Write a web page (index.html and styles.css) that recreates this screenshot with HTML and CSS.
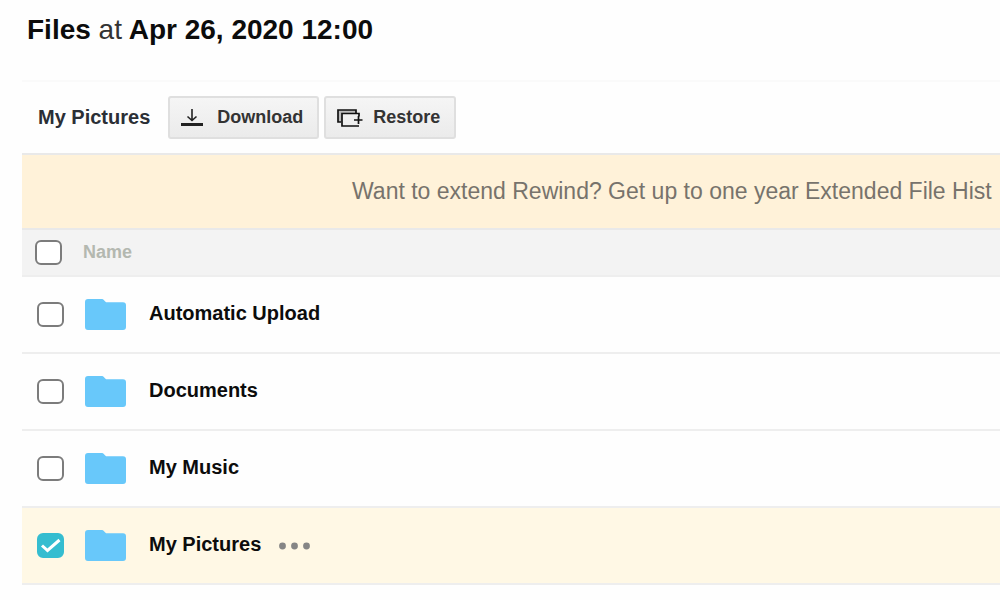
FILE: index.html
```
<!DOCTYPE html>
<html lang="en">
<head>
    <meta charset="UTF-8">
    <meta name="viewport" content="width=device-width, initial-scale=1.0">
    <title>Rewind</title>
    <link rel="stylesheet" href="styles.css">
</head>
<body>
    <svg class="sprite" aria-hidden="true">
        <symbol id="folder" viewBox="0 0 41 31">
            <path d="M3 0H17Q18 0 19 1.200L21 3.300H38Q41 3.300 41 6.300V28Q41 31 38 31H3Q0 31 0 28V3Q0 0 3 0Z" fill="#68c8fa"/>
        </symbol>
    </svg>

    <main class="page">
        <h1 class="title">Files <span>at</span> Apr 26, 2020 12:00</h1>

        <div class="toolbar">
            <h2 class="folder-name">My Pictures</h2>
            <button type="button" class="btn">
                <svg width="24" height="18" viewBox="0 0 24 18" fill="none" stroke="#222">
                    <path d="M11 0V11M6.500 7.500L11 11.500L15.500 7.500" stroke-width="1.600"/>
                    <path d="M0 15.500H22" stroke-width="3"/>
                </svg>
                <span>Download</span>
            </button>
            <button type="button" class="btn">
                <svg width="24" height="18" viewBox="0 0 24 18" fill="none" stroke="#111" stroke-width="1.700">
                    <path d="M1 1H19V4.500H5V13H1Z" fill="#bbb" stroke="none"/>
                    <path d="M4 13H1V1H19V4M22 17H5V4.500H22V7.500M17 11H25.500M21.500 7V15"/>
                </svg>
                <span>Restore</span>
            </button>
        </div>

        <div class="banner">
            <p>Want to extend Rewind? Get up to one year Extended File Hist</p>
        </div>

        <table class="files">
            <thead>
                <tr>
                    <th class="check"><input type="checkbox" aria-label="Select all"></th>
                    <th scope="col">Name</th>
                </tr>
            </thead>
            <tbody>
                <tr>
                    <td class="check"><input type="checkbox" id="upload"></td>
                    <td>
                        <div class="item">
                            <svg class="folder"><use href="#folder"/></svg>
                            <label for="upload">Automatic Upload</label>
                        </div>
                    </td>
                </tr>
                <tr>
                    <td class="check"><input type="checkbox" id="documents"></td>
                    <td>
                        <div class="item">
                            <svg class="folder"><use href="#folder"/></svg>
                            <label for="documents">Documents</label>
                        </div>
                    </td>
                </tr>
                <tr>
                    <td class="check"><input type="checkbox" id="music"></td>
                    <td>
                        <div class="item">
                            <svg class="folder"><use href="#folder"/></svg>
                            <label for="music">My Music</label>
                        </div>
                    </td>
                </tr>
                <tr class="selected">
                    <td class="check"><input type="checkbox" id="pictures" checked></td>
                    <td>
                        <div class="item">
                            <svg class="folder"><use href="#folder"/></svg>
                            <label for="pictures">My Pictures</label>
                            <button type="button" class="more" aria-label="More">
                                <svg width="31" height="8" viewBox="0 0 31 8" fill="#858585">
                                    <circle cx="3.500" cy="4" r="3.400"/>
                                    <circle cx="15.500" cy="4" r="3.400"/>
                                    <circle cx="27.500" cy="4" r="3.400"/>
                                </svg>
                            </button>
                        </div>
                    </td>
                </tr>
            </tbody>
        </table>
    </main>
</body>
</html>
```
FILE: styles.css
```
* {
    box-sizing: border-box;
}

body {
    margin: 0;
    background: #fefefe;
    color: #0c0c0c;
    font-family: "Liberation Sans", Arial, sans-serif;
}

.sprite {
    display: none;
}

.page {
    padding: 14px 0 0 22px;
    overflow: hidden;
}

.title {
    margin: 0;
    padding: 0 5px 34px;
    border-bottom: 2px solid #fafafa;
    font-size: 28px;
    line-height: 32px;
}

.title span {
    color: #333;
    font-weight: normal;
}

.toolbar {
    display: flex;
    align-items: center;
    gap: 5px;
    padding: 14px 16px;
}

.folder-name {
    margin: 0 13px 0 0;
    padding-bottom: 2px;
    color: #2b2f36;
    font-size: 20px;
    line-height: 24px;
}

.btn {
    display: flex;
    align-items: center;
    gap: 12px;
    height: 43px;
    padding: 0 14px 0 11px;
    border: 2px solid #dfdfdf;
    border-radius: 3px;
    background: linear-gradient(#f5f5f5, #ebebeb);
    color: #333;
    font: bold 18px "Liberation Sans", Arial, sans-serif;
    cursor: pointer;
}

.btn svg {
    overflow: visible;
}

.banner {
    border-top: 2px solid #e9e9e9;
    background: #fff2d9;
}

.banner p {
    margin: 0;
    padding: 22px 0 23px 330px;
    color: #77736c;
    font-size: 23px;
    line-height: 28px;
    white-space: nowrap;
}

.files {
    width: 100%;
    border-collapse: separate;
    border-spacing: 0;
    text-align: left;
}

.files th,
.files td {
    padding: 0;
    border-bottom: 2px solid #eee;
}

.files th {
    height: 49px;
    border-top: 2px solid #e9e9e9;
    background: #f3f3f3;
    color: #b4b8b0;
    font-size: 18px;
}

.files td {
    height: 77px;
    font-size: 20px;
    font-weight: bold;
}

.files .check {
    width: 61px;
    padding-left: 13px;
}

.files td.check {
    padding-left: 15px;
}

.files input {
    display: block;
    appearance: none;
    width: 27px;
    height: 25px;
    margin: 0;
    border: 2px solid #7c7c7c;
    border-radius: 6px;
    background: #fff;
}

.files input:checked {
    border-color: #35bdd0;
    background: #35bdd0 url("data:image/svg+xml,%3Csvg xmlns='http://www.w3.org/2000/svg' viewBox='0 0 23 21'%3E%3Cpath d='M3 10.500L8.500 15.500L20.500 5' fill='none' stroke='white' stroke-width='3'/%3E%3C/svg%3E") center / 100% 100% no-repeat;
}

.item {
    display: flex;
    align-items: center;
    padding-left: 2px;
}

.folder {
    width: 41px;
    height: 31px;
    margin-right: 23px;
}

.item label {
    padding-bottom: 3px;
}

.selected td {
    background: #fff8e5;
}

.more {
    display: flex;
    margin-left: 18px;
    padding: 0;
    border: 0;
    background: none;
    cursor: pointer;
}
```
